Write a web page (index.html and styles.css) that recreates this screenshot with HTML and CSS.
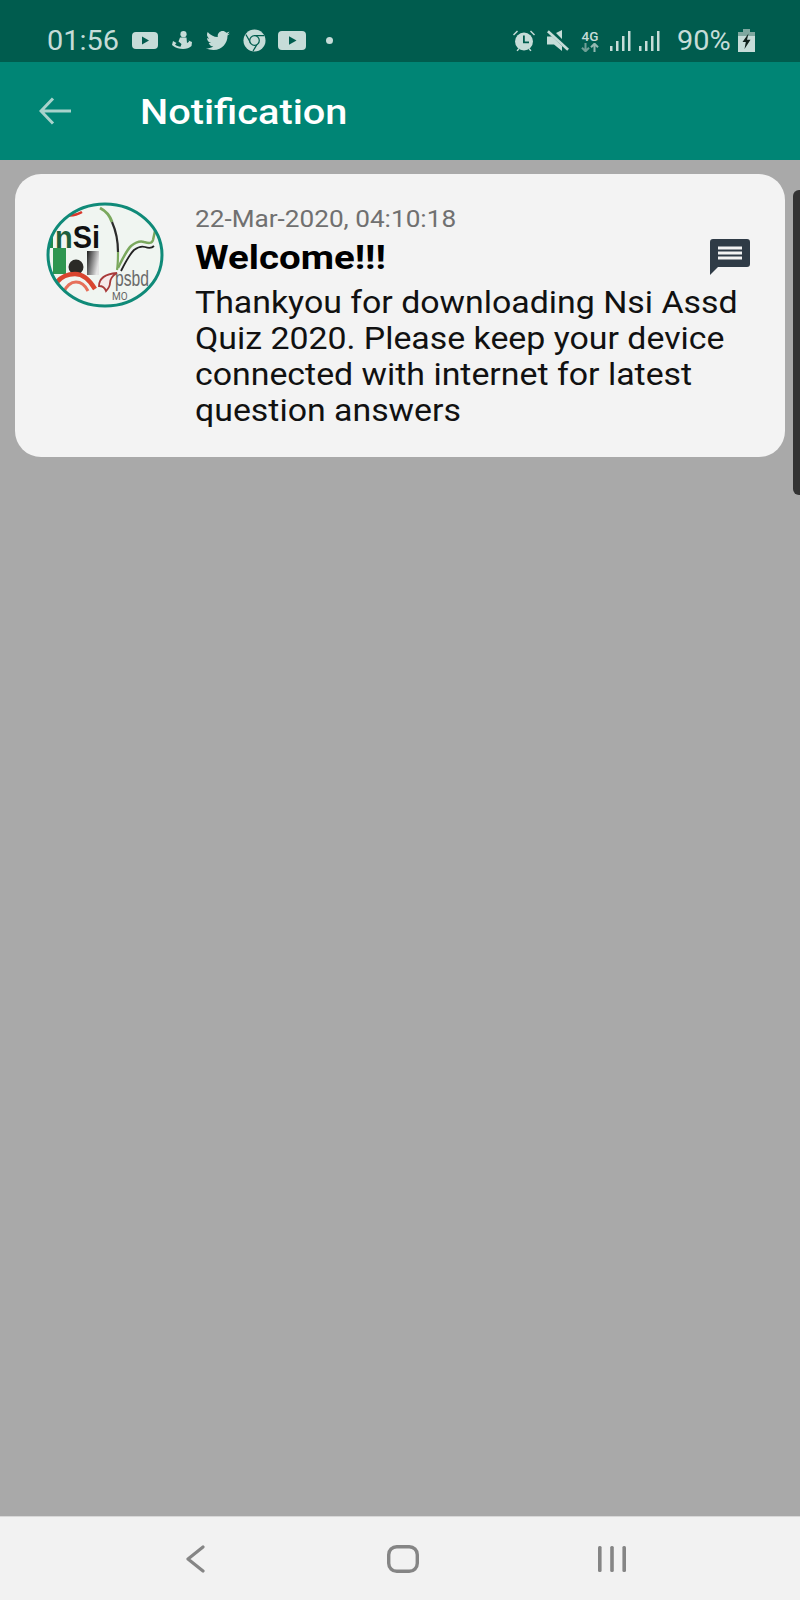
FILE: index.html
```html
<!DOCTYPE html>
<html lang="en">
<head>
  <meta charset="UTF-8" />
  <meta name="viewport" content="width=device-width, initial-scale=1.0" />
  <title>Notification</title>
  <link rel="stylesheet" href="styles.css">
</head>
<body>
  <div class="app">

    <div class="status-bar">
      <div class="status-left">
        <span class="status-time"><span class="wide">01:56</span></span>
        <svg class="ic-yt" viewBox="0 0 26 17"><rect width="26" height="17" rx="4" fill="#c6dcd8"/><path d="M10 4.600l7 3.900-7 3.900z" fill="#005c4e"/></svg>
        <svg class="ic-app" viewBox="0 0 20 19" fill="#c6dcd8"><circle cx="11.500" cy="3.200" r="3.100"/><path d="M8 6.500h6.500l.5 5.500 2-1.300-.5-1.200 3.500 1.500-.5 4c-2 2-5 3-8.500 3S4 17 2 15.500l-2-1.500 1-4 3.500 2-1.500 1.500c1.500 1.500 3.500 2 5.500 2.200l1-2.700-3-2.500z"/></svg>
        <svg class="ic-tw" viewBox="0 0 24 20"><path fill="#c6dcd8" d="M24 2.400c-.9.400-1.800.6-2.800.8 1-.6 1.800-1.600 2.200-2.700-1 .6-2 1-3.100 1.200C19.300.7 18 0 16.600 0c-2.700 0-4.900 2.200-4.900 4.900 0 .4 0 .8.100 1.100C7.700 5.800 4.100 3.900 1.700.9c-.4.700-.7 1.600-.7 2.500 0 1.700.9 3.200 2.200 4.100-.8 0-1.600-.2-2.200-.6v.1c0 2.400 1.700 4.400 3.900 4.800-.4.100-.8.200-1.300.2-.3 0-.6 0-.9-.1.600 2 2.400 3.400 4.600 3.400-1.700 1.300-3.800 2.100-6.100 2.100-.4 0-.8 0-1.200-.1C2.200 18.200 4.800 19 7.500 19c9.100 0 14-7.500 14-14v-.6c1-.7 1.800-1.600 2.500-2z"/></svg>
        <svg class="ic-chrome" viewBox="0 0 24 24"><circle cx="12" cy="12" r="11.500" fill="#c6dcd8"/><path d="M12 7h10M8 14.500L3 5.800M15.500 14.500L10.500 23" stroke="#005c4e" stroke-width="1.300" fill="none"/><circle cx="12" cy="12" r="5" fill="#c6dcd8" stroke="#005c4e" stroke-width="1.300"/></svg>
        <svg class="ic-yt2" viewBox="0 0 28 19"><rect width="28" height="19" rx="4" fill="#c6dcd8"/><path d="M11 5.300l7.500 4.200-7.500 4.200z" fill="#005c4e"/></svg>
        <span class="status-dot"></span>
      </div>
      <div class="status-right">
        <svg class="ic-alarm" viewBox="0 0 24 23" fill="#c6dcd8"><circle cx="12" cy="12.500" r="9"/><path d="M1 5.500L5 1.500l1 1-4 4zM23 5.500L19 1.500l-1 1 4 4z"/><path d="M4.500 21.500l2-2.500 1 1-1.800 2.300zM19.500 21.500l-2-2.500-1 1 1.800 2.300z"/><path d="M11 6.500h1.800v6H17v1.800h-6z" fill="#005c4e"/></svg>
        <svg class="ic-mute" viewBox="0 0 22 21" fill="#c6dcd8"><path d="M15 0v9L9 3zM0 6.500h5l10 9.500v5l-8-6.500H0z"/><path d="M1.800.2L22 18.800l-1.800 2L0 2.200z"/></svg>
        <div class="net">
          <span class="net-label">4G</span>
          <svg class="ic-arrows" viewBox="0 0 18 9" fill="none" stroke-width="2"><path d="M4.500 0v8M1 4.800l3.500 3.500L8 4.800" stroke="#6f9f96"/><path d="M13.500 9V1M10 4.200l3.500-3.500L17 4.200" stroke="#93b8b1"/></svg>
        </div>
        <svg class="ic-signal" viewBox="0 0 21 20" fill="#c6dcd8"><rect x="0" y="15" width="2.500" height="5"/><rect x="6" y="10" width="2.500" height="10"/><rect x="12" y="5" width="2.500" height="15"/><rect x="18" y="0" width="2.500" height="20"/></svg>
        <svg class="ic-signal sig2" viewBox="0 0 21 20" fill="#c6dcd8"><rect x="0" y="15" width="2.500" height="5"/><rect x="6" y="10" width="2.500" height="10"/><rect x="12" y="5" width="2.500" height="15"/><rect x="18" y="0" width="2.500" height="20"/></svg>
        <span class="status-pct"><span class="wide">90%</span></span>
        <svg class="ic-batt" viewBox="0 0 17 23"><rect x="5" y="0" width="7" height="3" fill="#7fa8a0"/><rect x="0" y="3" width="17" height="4" fill="#7fa8a0"/><rect x="0" y="7" width="17" height="16" fill="#c6dcd8"/><path d="M10.500 4.500L4.500 13h3.300l-1.300 7 6-9.200H9z" fill="#10201c"/></svg>
      </div>
    </div>

    <div class="toolbar">
      <svg class="back-arrow" viewBox="0 0 32 28" fill="none" stroke="#a8d3cc" stroke-width="3"><path d="M2 14H32M14 1.500L2 14l12 12.500"/></svg>
      <h1 class="toolbar-title">Notification</h1>
    </div>

    <div class="content">
      <div class="notif-card">
        <svg class="avatar" viewBox="0 0 118 106">
          <defs>
            <clipPath id="logoClip"><ellipse cx="59" cy="53" rx="57" ry="51"/></clipPath>
            <linearGradient id="logoFade" x1="0" y1="0" x2="1" y2="0.400"><stop offset="0" stop-color="#1c1c1c"/><stop offset="1" stop-color="#e4e4e4"/></linearGradient>
          </defs>
          <ellipse cx="59" cy="53" rx="57" ry="51" fill="#f0f5f1"/>
          <g clip-path="url(#logoClip)">
            <path d="M0 24h7v22H0z" fill="#1f8a4c"/>
            <path d="M7 46h13v26H7z" fill="#2e9650"/>
            <path d="M41 49h12v24H41z" fill="url(#logoFade)"/>
            <path d="M19 13c5 1 12 0 17-3" fill="none" stroke="#d8362a" stroke-width="2.500"/>
            <circle cx="30" cy="65" r="7.500" fill="#2b2a26"/>
            <path d="M11 80c5-6 11-8 18-8s14 5 20 15" fill="none" stroke="#d9452f" stroke-width="4.500"/>
            <path d="M18 90c2-6 7-10 12-10s9 3 12 9" fill="none" stroke="#e6705a" stroke-width="3"/>
            <path d="M54 6c6 3 10 8 12 14" fill="none" stroke="#7ba85e" stroke-width="3"/>
            <path d="M66 20c4 9 6 20 6 30" fill="none" stroke="#2b2b2b" stroke-width="2.200"/>
            <path d="M72 50c0 6 0 12-1 18" fill="none" stroke="#7ba85e" stroke-width="2.200"/>
            <path d="M72 66c4-8 8-17 13-22 5-4 10-5 13-4 4 1 8 2 9-2l2-9" fill="none" stroke="#7ba85e" stroke-width="2.500"/>
            <path d="M75 69c4-8 8-16 13-21 4-3 8-4 11-3 3 1 7 1 9-1" fill="none" stroke="#222" stroke-width="1.800"/>
            <path d="M53 84c0-7 6-12 18-13-5 3-7 6-7 10 0 4-2 6-4 8-1-3-3-5-7-5z" fill="#f6e9e9" stroke="#a83a3a" stroke-width="1.800"/>
          </g>
          <text x="9" y="46" class="logo-nsi" textLength="45" lengthAdjust="spacingAndGlyphs"><tspan class="logo-n">n</tspan>Si</text>
          <text x="69" y="84" class="logo-psb" textLength="34" lengthAdjust="spacingAndGlyphs">psbd</text>
          <text x="66" y="98" class="logo-mo">MO</text>
          <ellipse cx="59" cy="53" rx="57" ry="51" fill="none" stroke="#0f8a78" stroke-width="3"/>
        </svg>
        <div class="notif-text">
          <div class="notif-date">22-Mar-2020, 04:10:18</div>
          <div class="notif-title">Welcome!!!</div>
          <div class="notif-body">Thankyou for downloading Nsi Assd<br>Quiz 2020. Please keep your device<br>connected with internet for latest<br>question answers</div>
        </div>
        <svg class="msg-icon" viewBox="0 0 40 36"><path fill="#2f3b46" d="M3 0h34a3 3 0 0 1 3 3v22a3 3 0 0 1-3 3H8l-8 8V3a3 3 0 0 1 3-3z"/><path fill="#f3f3f3" d="M8 7.500h24v3H8zM8 12.500h24v3H8zM8 17.500h24v3H8z"/></svg>
      </div>
      <div class="scroll-thumb"></div>
    </div>

    <div class="nav-bar">
      <svg class="nav-back" viewBox="0 0 19 28" fill="none" stroke="#858585" stroke-width="3.200" stroke-linecap="round" stroke-linejoin="round"><path d="M17 2L2 14l15 12"/></svg>
      <svg class="nav-home" viewBox="0 0 32 28" fill="none" stroke="#858585" stroke-width="3.400"><rect x="1.700" y="1.700" width="28.600" height="24.600" rx="8"/></svg>
      <svg class="nav-recent" viewBox="0 0 28 26" fill="#858585"><rect x="0" y="0" width="3.600" height="26" rx="1.500"/><rect x="12.200" y="0" width="3.600" height="26" rx="1.500"/><rect x="24.400" y="0" width="3.600" height="26" rx="1.500"/></svg>
    </div>

  </div>
</body>
</html>
```

FILE: styles.css
```css
body {
  margin: 0;
  font-family: Roboto, "Liberation Sans", sans-serif;
  background-color: #a9a9a9;
}

svg {
  display: block;
  flex-shrink: 0;
}

.app {
  display: flex;
  flex-direction: column;
  height: 1600px;
}

/* the capture is stretched sideways, so text gets the same stretch */
.wide {
  display: inline-block;
  transform: scaleX(1.07);
  transform-origin: left center;
}

/* status bar */
.status-bar {
  height: 62px;
  background-color: #005c4e;
  color: #c6dcd8;
  display: flex;
  align-items: center;
  justify-content: space-between;
  padding: 0 45px 0 47px;
  box-sizing: border-box;
  font-size: 27px;
}

.status-left,
.status-right {
  display: flex;
  align-items: center;
  margin-top: 19px;
}

.status-time {
  width: 85px;
}

.ic-yt { width: 26px; height: 17px; }
.ic-app { width: 20px; height: 19px; margin-left: 14px; }
.ic-tw { width: 26px; height: 20px; margin-left: 13px; }
.ic-chrome { width: 23px; height: 23px; margin-left: 12px; }
.ic-yt2 { width: 28px; height: 19px; margin-left: 12px; }

.status-dot {
  width: 7px;
  height: 7px;
  border-radius: 50%;
  background-color: #c6dcd8;
  margin-left: 20px;
}

.ic-alarm { width: 24px; height: 23px; }
.ic-mute { width: 22px; height: 21px; margin-left: 11px; }

.net {
  width: 18px;
  margin-left: 12px;
  display: flex;
  flex-direction: column;
  align-items: center;
}

.net-label {
  font-size: 13.5px;
  font-weight: 500;
  line-height: 14px;
}

.ic-arrows { width: 18px; height: 9px; }

.ic-signal { width: 21px; height: 20px; margin-left: 11px; }
.sig2 { margin-left: 8px; }

.status-pct {
  margin-left: 17px;
  width: 61px;
}

.ic-batt { width: 17px; height: 23px; }

/* toolbar */
.toolbar {
  height: 98px;
  background-color: #008575;
  display: flex;
  align-items: center;
  padding-left: 39px;
}

.back-arrow {
  width: 32px;
  height: 28px;
}

.toolbar-title {
  margin: 2px 0 0 69px;
  font-size: 35px;
  font-weight: 500;
  color: #fff;
  transform: scaleX(1.135);
  transform-origin: left center;
}

/* list */
.content {
  flex: 1;
  position: relative;
  padding: 14px 15px 0;
}

.notif-card {
  height: 283px;
  box-sizing: border-box;
  background-color: #f3f3f3;
  border-radius: 26px;
  display: flex;
  align-items: flex-start;
  padding: 27px 35px 0 31px;
}

.avatar {
  width: 118px;
  height: 106px;
  margin-top: 1px;
}

.logo-nsi {
  font-family: "Liberation Sans", sans-serif;
  font-size: 31px;
  font-weight: 700;
  fill: #111;
}

.logo-n {
  fill: #1d5f3c;
}

.logo-psb {
  font-family: "Liberation Sans", sans-serif;
  font-size: 22px;
  fill: #6a6a6a;
}

.logo-mo {
  font-size: 10px;
  fill: #666;
}

.notif-text {
  flex: 1;
  margin-left: 31px;
  margin-top: 2px;
  white-space: nowrap;
}

.notif-date {
  font-size: 23.5px;
  line-height: 32px;
  color: #707070;
  transform: scaleX(1.113);
  transform-origin: left center;
}

.notif-title {
  font-size: 34px;
  font-weight: 700;
  line-height: 45px;
  color: #000;
  transform: scaleX(1.13);
  transform-origin: left center;
}

.notif-body {
  font-size: 30.5px;
  line-height: 36px;
  color: #111;
  margin-top: 5px;
  transform: scaleX(1.11);
  transform-origin: left center;
}

.msg-icon {
  width: 40px;
  height: 36px;
  margin-top: 38px;
}

.scroll-thumb {
  position: absolute;
  top: 30px;
  right: 0;
  width: 7px;
  height: 305px;
  background-color: #333;
  border-radius: 6px 0 0 6px;
}

/* bottom nav */
.nav-bar {
  height: 84px;
  background-color: #f2f2f2;
  border-top: 1px solid #d8d8d8;
  box-sizing: border-box;
  display: flex;
  align-items: center;
  padding-left: 186px;
}

.nav-back { width: 19px; height: 28px; }
.nav-home { width: 32px; height: 28px; margin-left: 182px; }
.nav-recent { width: 28px; height: 26px; margin-left: 179px; }
```
